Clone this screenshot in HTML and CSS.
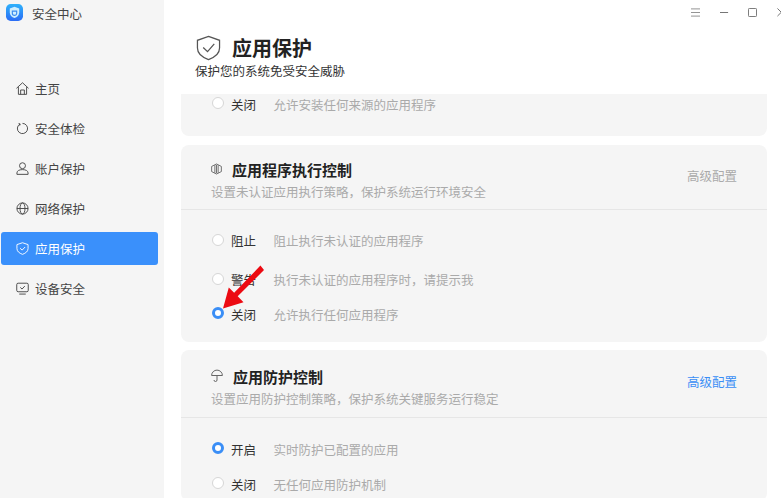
FILE: index.html
```html
<!DOCTYPE html>
<html lang="zh">
<head>
<meta charset="utf-8">
<title>安全中心</title>
<link rel="stylesheet" href="styles.css">
</head>
<body>
<div class="app">
  <aside class="sidebar">
    <div class="brand">
      <svg class="logo" viewBox="0 0 18 18"><defs><linearGradient id="lg" x1="0" y1="0" x2="0" y2="1"><stop offset="0" stop-color="#2fb2fb"/><stop offset="1" stop-color="#2a6cf5"/></linearGradient></defs><rect width="18" height="18" rx="5" fill="url(#lg)"/><path d="M9 3l5 1.700v4.200c0 2.900-2.200 4.700-5 6-2.800-1.300-5-3.100-5-6V4.700z" fill="#cfeefe"/><path d="M6.700 7.500h4.600v2.300a2.300 2.300 0 0 1-4.600 0z" fill="none" stroke="#3a8cf0" stroke-width="1.200"/></svg>
      <span>安全中心</span>
    </div>
    <nav class="nav">
      <a class="nav-item"><svg viewBox="0 0 14 14"><path d="M.5 6.800 7 .8l6.500 6M2.600 5.500v7.800h8.800V5.500M5 13.300V8.600h4v4.700"/></svg><span>主页</span></a>
      <a class="nav-item"><svg viewBox="0 0 14 14"><path d="M4.300 2.200A5.500 5.500 0 1 0 7 1.500M2.800 1.600l1.700.5-.5 1.800"/></svg><span>安全体检</span></a>
      <a class="nav-item"><svg viewBox="0 0 14 14"><circle cx="7" cy="4" r="3.200"/><path d="M1 13.300v-1.500c0-2.300 2.400-3.600 6-3.600s6 1.300 6 3.600v1.500z"/></svg><span>账户保护</span></a>
      <a class="nav-item"><svg viewBox="0 0 14 14"><circle cx="7" cy="7" r="6"/><ellipse cx="7" cy="7" rx="2.700" ry="6"/><path d="M1 7h12"/></svg><span>网络保护</span></a>
      <a class="nav-item active"><svg viewBox="0 0 14 14"><path d="M7 .8 13 2.800v4.200c0 3-2.400 5-6 6.300C3.400 12 1 10 1 7V2.800z"/><path d="m4.400 6.700 2.200 2 3.200-3.300"/></svg><span>应用保护</span></a>
      <a class="nav-item"><svg viewBox="0 0 14 14"><rect x=".8" y="1.300" width="12.400" height="9.200" rx="1.500"/><path d="M3.500 13h7M4.600 5.800l1.900 1.800 3-3.200"/></svg><span>设备安全</span></a>
    </nav>
  </aside>
  <main class="main">
    <div class="titlebar">
      <svg class="tb tb-menu" viewBox="0 0 10 10"><path d="M0 1h10M0 5h10M0 9h10"/></svg>
      <svg class="tb tb-min" viewBox="0 0 10 10"><path d="M0 5h9"/></svg>
      <svg class="tb tb-max" viewBox="0 0 10 10"><rect x=".5" y=".5" width="9" height="9" rx="1"/></svg>
      <svg class="tb tb-close" viewBox="0 0 10 10"><path d="m.5.500 8.500 8.500M9 .5.500 9"/></svg>
    </div>
    <header class="page-head">
      <div class="page-title">
        <svg viewBox="0 0 26 26"><path d="M13 1 24.500 5v8c0 5.500-4.500 9.500-11.500 12C6 22.500 1.500 18.500 1.500 13V5z"/><path d="m7.500 12.500 4.500 4.300 7-8"/></svg>
        <h1>应用保护</h1>
      </div>
      <p>保护您的系统免受安全威胁</p>
    </header>
    <div class="content">
      <section class="card card-first">
        <div class="option"><i class="radio"></i><b>关闭</b><span>允许安装任何来源的应用程序</span></div>
      </section>
      <section class="card card-exec">
        <div class="card-head">
          <div class="head-text">
            <h2><svg viewBox="0 0 12 12"><path d="M6 .5 11.300 3.200v5.600L6 11.500.7 8.800V3.200z"/><path d="M4.200 1.800v8.400M6 1.500v9M7.800 1.800v8.400"/></svg>应用程序执行控制</h2>
            <p>设置未认证应用执行策略，保护系统运行环境安全</p>
          </div>
          <a class="config">高级配置</a>
        </div>
        <div class="options">
          <div class="option opt-tight"><i class="radio"></i><b>阻止</b><span>阻止执行未认证的应用程序</span></div>
          <div class="option opt-tight opt-warn"><i class="radio"></i><b>警告</b><span>执行未认证的应用程序时，请提示我</span></div>
          <div class="option opt-off"><i class="radio on"></i><b>关闭</b><span>允许执行任何应用程序</span></div>
        </div>
      </section>
      <section class="card card-guard">
        <div class="card-head">
          <div class="head-text">
            <h2><svg viewBox="0 0 12 13"><path d="M.6 6.500a5.400 5.400 0 0 1 10.800 0zM6 6.500v4.500a1.500 1.500 0 0 1-3 0"/></svg>应用防护控制</h2>
            <p>设置应用防护控制策略，保护系统关键服务运行稳定</p>
          </div>
          <a class="config link">高级配置</a>
        </div>
        <div class="options">
          <div class="option"><i class="radio on"></i><b>开启</b><span>实时防护已配置的应用</span></div>
          <div class="option opt-none"><i class="radio"></i><b>关闭</b><span>无任何应用防护机制</span></div>
        </div>
      </section>
    </div>
    <svg class="arrow" viewBox="0 0 46 48"><path d="M42 0 46 5 16.500 34.500 23 41 0 48 6.500 24.500 12.500 30.500z" fill="#ec0a12"/></svg>
  </main>
</div>
</body>
</html>
```
FILE: styles.css
```css
* { box-sizing: border-box; }
html, body { margin: 0; height: 100%; }
body { font-family: "Noto Sans CJK SC", "Noto Sans", sans-serif; color: #333; background: #fff; overflow: hidden; }
h1, h2, p { margin: 0; }
i, b { font-style: normal; font-weight: 400; }

.app { display: flex; width: 781px; height: 498px; overflow: hidden; }

.sidebar { width: 164px; flex: none; background: #f5f5f5; }
.brand { display: flex; align-items: center; gap: 9px; height: 28px; padding-left: 6px; font-size: 12.5px; color: #444; }
.logo { width: 17px; height: 17px; margin-top: -4px; }
.brand span { margin-top: -1px; }

.nav { display: flex; flex-direction: column; gap: 7px; margin-top: 44px; padding: 0 6px 0 1px; }
.nav-item { display: flex; align-items: center; gap: 6px; height: 33px; padding-left: 15px; border-radius: 3px; font-size: 12.5px; color: #444; }
.nav-item svg { width: 13px; height: 13px; fill: none; stroke: #444; stroke-width: 1; }
.nav-item.active { background: #3a90fb; color: #fff; }
.nav-item.active svg { stroke: #fff; }

.main { position: relative; flex: 1; min-width: 0; display: flex; flex-direction: column; }

.titlebar { display: flex; align-items: center; height: 24px; padding-left: 527px; flex: none; }
.tb { width: 9px; height: 9px; fill: none; stroke: #666; stroke-width: 1; flex: none; }
.tb-menu { stroke: #888; }
.tb-min { margin-left: 20px; }
.tb-max { margin-left: 19px; }
.tb-close { margin-left: 20px; }

.page-head { height: 70px; padding: 10px 0 0 31px; flex: none; }
.page-title { display: flex; align-items: center; gap: 11px; height: 27px; padding-left: 1px; }
.page-title svg { width: 25px; height: 26px; fill: none; stroke: #555; stroke-width: 1.300; }
.page-title h1 { font-size: 20px; font-weight: 700; color: #222; line-height: 27px; }
.page-head p { font-size: 12.5px; color: #333; line-height: 16px; margin-top: 2px; }

.content { flex: 1; min-height: 0; overflow: hidden; display: flex; flex-direction: column; gap: 9px; padding: 0 14px 0 17px; }

.card { background: #f5f5f5; border-radius: 8px; flex: none; }
.card-first { height: 42px; border-radius: 0 0 8px 8px; overflow: hidden; }
.card-first .option { margin-top: -7px; }
.card-exec { height: 197px; margin-bottom: -1px; }

.card-head { display: flex; justify-content: space-between; align-items: flex-start; height: 65px; padding: 15px 30px 0; border-bottom: 1px solid #e6e6e6; }
.head-text h2 { display: flex; align-items: center; gap: 10px; font-size: 15px; font-weight: 700; color: #222; line-height: 20px; }
.head-text h2 svg { width: 11px; height: 12px; margin-top: -3px; fill: none; stroke: #666; stroke-width: 1; }
.head-text p { font-size: 12.5px; color: #aaa; line-height: 18px; margin-top: 3px; }
.config { font-size: 12.5px; line-height: 18px; color: #aaa; margin-top: 7px; }
.config.link { color: #3a8ef6; margin-top: 6px; }

.card-guard .card-head { height: 68px; padding-top: 17px; }
.card-guard h2 svg { width: 12px; height: 13px; margin-top: -4px; }

.options { padding-top: 14px; }
.card-exec .options { padding-top: 13px; }
.option { display: flex; align-items: center; height: 34px; padding-left: 31px; font-size: 12.5px; }
.option b { width: 42.5px; margin-left: 7px; color: #333; }
.option span { color: #aaa; }
.opt-warn { margin-top: 5px; }
.opt-off { margin-top: 1px; }
.opt-none { margin-top: 1px; }

.radio { width: 12px; height: 12px; flex: none; border-radius: 50%; background: #fff; border: 1px solid #d6d6d6; margin-top: -3px; }
.opt-tight .radio { margin-top: -1px; }
.radio.on { border: 3px solid #3a8ef6; }

.arrow { position: absolute; left: 59px; top: 264px; width: 41px; height: 46px; }
```
